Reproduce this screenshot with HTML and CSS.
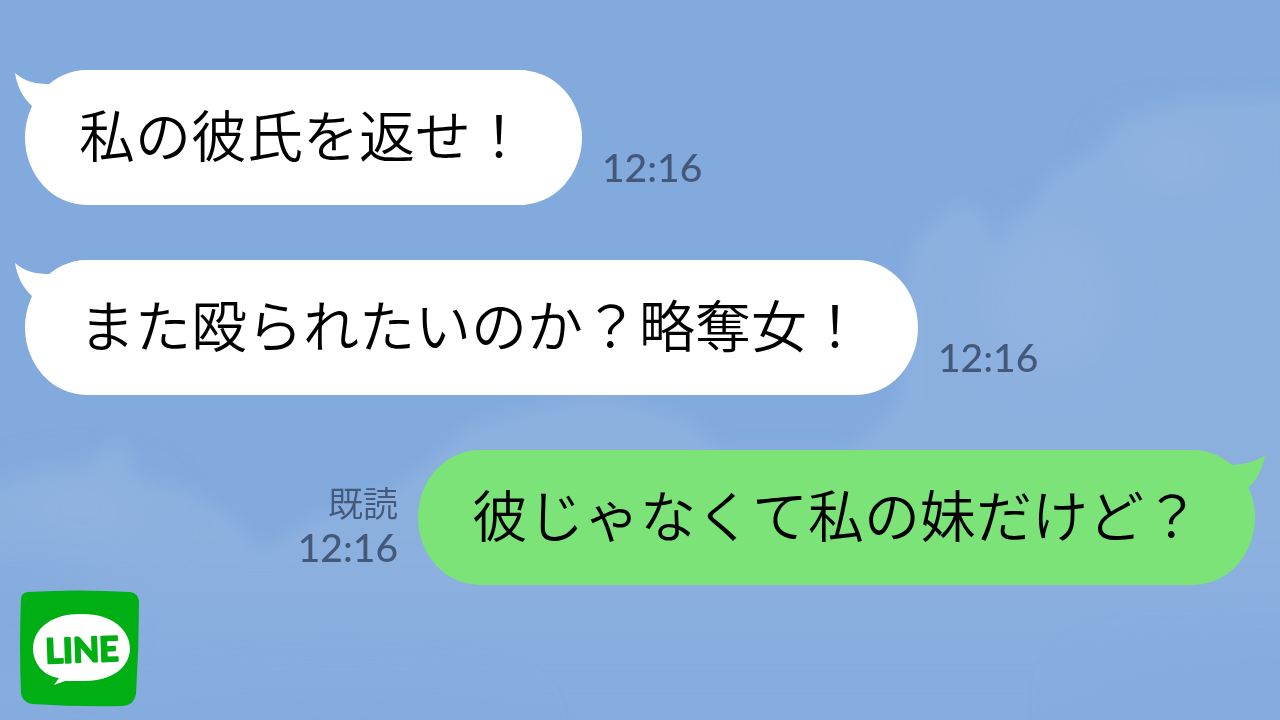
FILE: index.html
```html
<!DOCTYPE html>
<html lang="ja">
<head>
  <meta charset="UTF-8" />
  <meta name="viewport" content="width=device-width, initial-scale=1" />
  <title>LINE トーク</title>
  <link rel="stylesheet" href="styles.css">
</head>
<body>

  <!-- Sky background -->
  <svg class="sky" viewBox="0 0 1280 720" preserveAspectRatio="none" aria-hidden="true">
    <defs>
      <linearGradient id="fade" gradientUnits="userSpaceOnUse" x1="0" y1="90" x2="0" y2="740">
        <stop offset="0" stop-color="#8fb2df" />
        <stop offset=".7" stop-color="#8fb2df" />
        <stop offset="1" stop-color="#8fb2df" stop-opacity=".3" />
      </linearGradient>
      <filter id="soft" x="-20%" y="-20%" width="140%" height="140%">
        <feGaussianBlur stdDeviation="9" />
      </filter>
      <filter id="softer" x="-40%" y="-40%" width="180%" height="180%">
        <feGaussianBlur stdDeviation="28" />
      </filter>
    </defs>
    <path fill="url(#fade)" filter="url(#soft)" opacity=".8" d="M1320 95 L1190 100 L1125 118 L1100 150 L1050 175 L1035 205 L1010 222 L998 252 L980 205 L950 207 L915 240 L900 300 L900 400 L850 450 L720 450 L690 420 L645 405 L600 395 L540 405 L470 425 L420 470 L390 490 L310 520 L262 550 L230 515 L190 490 L137 480 L125 440 L105 445 L90 465 L45 470 L-40 500 L-40 760 L1320 760 Z" />
    <g fill="#98b7e3" filter="url(#softer)" opacity=".5">
      <ellipse cx="1175" cy="160" rx="60" ry="24" />
      <ellipse cx="1050" cy="300" rx="60" ry="70" />
      <ellipse cx="80" cy="510" rx="80" ry="22" />
    </g>
    <g fill="#82aadd" filter="url(#softer)" opacity=".8">
      <ellipse cx="1260" cy="700" rx="180" ry="40" />
      <ellipse cx="10" cy="620" rx="90" ry="50" />
      <ellipse cx="340" cy="730" rx="180" ry="34" />
    </g>
  </svg>

  <main class="chat">
    <div class="message">
      <div class="bubble">
        <svg class="tail" viewBox="0 0 40 40" aria-hidden="true"><path d="M0 3 C10 12 22 14 35 14 L40 24 L28 40 L17 36 C8 28 2 16 0 3 Z" /></svg>
        <p>私の彼氏を返せ！</p>
      </div>
      <div class="meta"><time>12:16</time></div>
    </div>

    <div class="message">
      <div class="bubble">
        <svg class="tail" viewBox="0 0 40 40" aria-hidden="true"><path d="M0 3 C10 12 22 14 35 14 L40 24 L28 40 L17 36 C8 28 2 16 0 3 Z" /></svg>
        <p>また殴られたいのか？略奪女！</p>
      </div>
      <div class="meta"><time>12:16</time></div>
    </div>

    <div class="message mine">
      <div class="bubble">
        <svg class="tail" viewBox="0 0 40 40" aria-hidden="true"><path d="M40 5 C30 12 20 14 7 15 L0 24 L12 40 L24 37 C32 30 38 18 40 5 Z" /></svg>
        <p>彼じゃなくて私の妹だけど？</p>
      </div>
      <div class="meta">
        <span class="read">既読</span>
        <time>12:16</time>
      </div>
    </div>
  </main>

  <footer class="footer">
    <svg class="logo" viewBox="0 0 120 118" role="img" aria-label="LINE">
      <path fill="#00af14" d="M8 2 Q58 -1 110 2 Q118 3 119 11 Q119 58 116 104 Q114 115 103 116 Q58 117 12 114 Q2 112 1 103 Q-1 56 1 9 Q1 3 8 2 Z" />
      <path fill="#fff" d="M60 24 C91 23 110 39 110 59 C109 79 91 90 66 91 L45 91 L34 95 L39 88 C23 86 13 73 13 58 C14 37 33 24 60 24 Z" />
      <text class="logo-text" x="62" y="72" text-anchor="middle" transform="rotate(-2 62 60)">LINE</text>
    </svg>
  </footer>

</body>
</html>
```
FILE: styles.css
```css
* {
  margin: 0;
  padding: 0;
  box-sizing: border-box;
}

body {
  font-family: "Noto Sans CJK JP", sans-serif;
  background: #82aadd;
  color: #000;
  min-height: 100vh;
}

.sky {
  position: fixed;
  inset: 0;
  width: 100%;
  height: 100%;
  z-index: -1;
}

/* Messages */
.chat {
  display: flex;
  flex-direction: column;
  gap: 55px;
  padding: 70px 25px 0;
}

.message {
  display: flex;
  align-items: flex-end;
  gap: 20px;
}

.message.mine {
  flex-direction: row-reverse;
}

.bubble {
  position: relative;
  padding: 23px 55px 32px 54px;
  border-radius: 62px / 68px;
  background: #fff;
  fill: #fff;
}

.mine .bubble {
  background: #7be378;
  fill: #7be378;
}

.bubble p {
  font-size: 56px;
  font-weight: 350;
  font-kerning: none;
  line-height: 80px;
}

.tail {
  position: absolute;
  top: 0;
  left: -10px;
  width: 40px;
  height: 40px;
}

.mine .tail {
  left: auto;
  right: -10px;
}

.meta {
  display: flex;
  flex-direction: column;
  align-items: flex-end;
  padding-bottom: 15px;
  color: #44587a;
}

.meta time {
  font-family: Lato, sans-serif;
  font-size: 39px;
  font-weight: 500;
  line-height: 46px;
}

.read {
  font-size: 35px;
  font-weight: 350;
  line-height: 44px;
}

/* Logo */
.footer {
  padding: 5px 20px 0;
}

.logo {
  display: block;
  width: 120px;
  height: 118px;
}

.logo-text {
  font-family: Lato, sans-serif;
  font-size: 34px;
  font-weight: 700;
  fill: #00af14;
  stroke: #00af14;
  stroke-width: 2px;
  stroke-linejoin: round;
}
```
